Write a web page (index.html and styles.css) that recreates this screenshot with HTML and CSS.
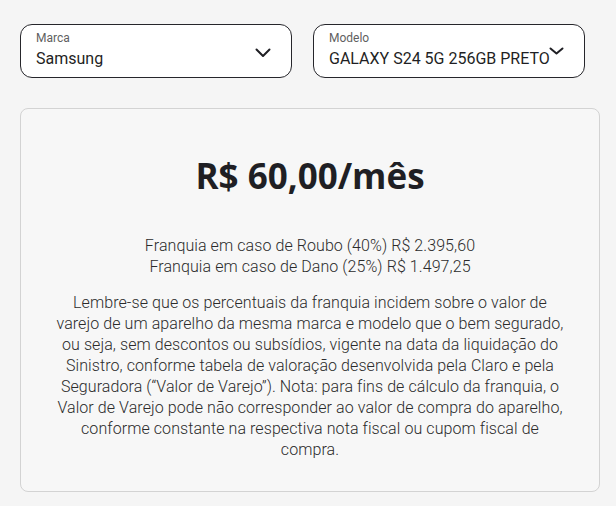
FILE: index.html
```html
<!DOCTYPE html>
<html lang="pt-BR">
<head>
<meta charset="utf-8">
<title>Seguro</title>
<link rel="stylesheet" href="styles.css">
</head>
<body>
<div class="page">
  <div class="selects">
    <div class="select">
      <span class="select-label">Marca</span>
      <span class="select-value">Samsung</span>
      <svg class="chevron" width="16" height="10" viewBox="0 0 16 10"><path d="M1.5 1.5 L8 8 L14.5 1.5" fill="none" stroke="#1f1f24" stroke-width="2" stroke-linecap="round" stroke-linejoin="round"/></svg>
    </div>
    <div class="select">
      <span class="select-label">Modelo</span>
      <span class="select-value">GALAXY S24 5G 256GB PRETO</span>
      <svg class="chevron chevron-flat" width="15" height="8" viewBox="0 0 15 8"><path d="M1.5 1.5 L7.5 6.5 L13.5 1.5" fill="none" stroke="#1f1f24" stroke-width="2" stroke-linecap="round" stroke-linejoin="round"/></svg>
    </div>
  </div>
  <div class="card">
    <div class="price">R$ 60,00/mês</div>
    <div class="franquias">
      <p>Franquia em caso de Roubo (40%) R$ 2.395,60</p>
      <p>Franquia em caso de Dano (25%) R$ 1.497,25</p>
    </div>
    <p class="note">Lembre-se que os percentuais da franquia incidem sobre o valor de varejo de um aparelho da mesma marca e modelo que o bem segurado, ou seja, sem descontos ou subsídios, vigente na data da liquidação do Sinistro, conforme tabela de valoração desenvolvida pela Claro e pela Seguradora (“Valor de Varejo”). Nota: para fins de cálculo da franquia, o Valor de Varejo pode não corresponder ao valor de compra do aparelho, conforme constante na respectiva nota fiscal ou cupom fiscal de compra.</p>
  </div>
</div>
</body>
</html>
```

FILE: styles.css
```css
html, body {
  margin: 0;
  padding: 0;
  background: #f5f5f5;
}
body {
  font-family: Roboto, "Liberation Sans", sans-serif;
  color: #222;
}
.page {
  padding: 24px 16px 0 20px;
}
.selects {
  display: grid;
  grid-template-columns: 272px 272px;
  column-gap: 21px;
}
.select {
  position: relative;
  box-sizing: border-box;
  height: 54px;
  background: #fff;
  border: 1px solid #26262b;
  border-radius: 12px;
  padding: 6px 16px 0 15px;
  display: flex;
  flex-direction: column;
}
.select-label {
  font-size: 12px;
  line-height: 14px;
  color: #5f5f5f;
}
.select-value {
  font-size: 16px;
  line-height: 20px;
  margin-top: 4px;
  color: #1f1f24;
  white-space: nowrap;
}
.chevron {
  position: absolute;
  right: 20px;
  top: 23px;
}
.chevron-flat {
  top: 22px;
  right: 20px;
}
.card {
  box-sizing: border-box;
  width: 580px;
  margin-top: 30px;
  height: 384px;
  background: #f7f7f7;
  border: 1px solid #d3d3d3;
  border-radius: 8px;
  padding: 44px 33px 0;
  text-align: center;
}
.price {
  font-family: "Open Sans", sans-serif;
  font-weight: 700;
  font-size: 35px;
  line-height: 46px;
  color: #1f1f24;
}
.franquias {
  margin-top: 36px;
}
.franquias p, .note {
  margin: 0;
  font-size: 16px;
  line-height: 21px;
  font-weight: 300;
  letter-spacing: 0.08px;
  color: #2b2b2b;
}
.note {
  margin-top: 15px;
}
```
